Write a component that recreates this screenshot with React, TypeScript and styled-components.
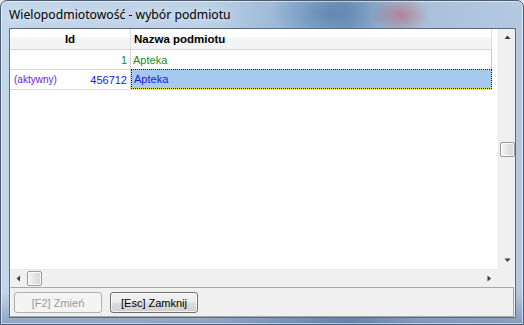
import React from "react";
import styled, { createGlobalStyle } from "styled-components";

type Row = {
  id: number;
  name: string;
  note?: string;
  active?: boolean;
};

const rows: Row[] = [
  { id: 1, name: "Apteka" },
  { id: 456712, name: "Apteka", note: "(aktywny)", active: true },
];

const GlobalStyle = createGlobalStyle`
  html, body {
    margin: 0;
    padding: 0;
    background: #dfe6ee;
  }
  * { box-sizing: border-box; }
`;

const Window = styled.div`
  position: relative;
  width: 524px;
  height: 325px;
  display: flex;
  flex-direction: column;
  padding: 0 7px 6px 8px;
  border-radius: 7px 7px 0 0;
  border: 1px solid #4a5d74;
  background:
    radial-gradient(ellipse 30px 18px at 400px 14px, rgba(190, 80, 90, 0.5), transparent),
    radial-gradient(ellipse 60px 30px at 330px 12px, rgba(60, 100, 150, 0.45), transparent),
    linear-gradient(180deg, transparent 0%, transparent 90%, rgba(40, 70, 120, 0.35) 100%),
    linear-gradient(
      90deg,
      #c4d6ea 0%,
      #bcd0e6 40%,
      #8fb0d2 58%,
      #7d9fc5 66%,
      #a9c0da 80%,
      #b4c9e0 100%
    );
  box-shadow: inset 0 0 0 1px rgba(255, 255, 255, 0.55);
  overflow: hidden;
`;

const TitleBar = styled.div`
  height: 27px;
  display: flex;
  align-items: center;
`;

const Title = styled.span`
  font-family: "Noto Sans", "Liberation Sans", sans-serif;
  font-size: 12.2px;
  color: #000;
  text-shadow: 0 0 8px rgba(255, 255, 255, 0.9);
`;

const Client = styled.div`
  flex: 1;
  display: flex;
  flex-direction: column;
  border: 1px solid #5a6b7e;
  background: #f0f0f0;
`;

const GridBox = styled.div`
  display: flex;
  flex-direction: column;
  height: 257px;
  background: #fff;
`;

const GridMain = styled.div`
  display: flex;
  height: 240px;
`;

const Viewport = styled.div`
  flex: 1;
  background: #fff;
`;

const Table = styled.div`
  width: 482px;
  font-family: "Liberation Sans", Arial, sans-serif;
  font-size: 11px;
`;

const HeaderRow = styled.div`
  display: grid;
  grid-template-columns: 121px 361px;
  height: 21px;
  border-bottom: 1px solid #d5d5d5;
  background: linear-gradient(#ffffff 0%, #ffffff 40%, #f3f4f6 45%, #f3f4f6 100%);
`;

const HeaderCell = styled.div<{ $align: "center" | "left" }>`
  display: flex;
  align-items: center;
  justify-content: ${(p) => (p.$align === "center" ? "center" : "flex-start")};
  padding-left: ${(p) => (p.$align === "center" ? "0" : "3px")};
  font-weight: bold;
  font-size: 11.5px;
  color: #000;
  border-right: 1px solid #dcdcdc;
`;

const DataRow = styled.div`
  display: grid;
  grid-template-columns: 121px 361px;
  height: 20px;
  border-bottom: 1px solid #d9d9d9;
`;

const IdCell = styled.div<{ $active?: boolean }>`
  display: flex;
  align-items: center;
  justify-content: space-between;
  padding: 0 3px 0 4px;
  border-right: 1px solid #d9d9d9;
  color: ${(p) => (p.$active ? "#1818e8" : "#1a8a1a")};
`;

const Note = styled.span`
  font-size: 10px;
  color: #6a20e0;
`;

const NameCell = styled.div<{ $selected?: boolean }>`
  display: flex;
  align-items: center;
  padding-left: 2px;
  border-right: 1px solid #c8c8c8;
  color: ${(p) => (p.$selected ? "#1818e8" : "#1a8a1a")};
  ${(p) =>
    p.$selected &&
    `
    margin-top: -1px;
    border: 1px dotted #111;
    background:
      linear-gradient(#a6c9ef, #a6c9ef) padding-box,
      linear-gradient(#e6e63a, #e6e63a) border-box;
  `}
`;

const VScroll = styled.div`
  width: 17px;
  display: flex;
  flex-direction: column;
  background: #f0f0f0;
  border-left: 1px solid #e8e8e8;
`;

const ArrowButton = styled.div`
  width: 17px;
  height: 17px;
  flex: none;
  display: flex;
  align-items: center;
  justify-content: center;
`;

const VTrack = styled.div`
  flex: 1;
  display: flex;
  flex-direction: column;
  align-items: center;
`;

const Thumb = styled.div`
  width: 15px;
  height: 15px;
  border: 1px solid #9a9a9a;
  border-radius: 2px;
  background: linear-gradient(90deg, #f6f6f6 0%, #e4e4e4 50%, #d6d6d6 100%);
  box-shadow: inset 0 0 0 1px rgba(255, 255, 255, 0.8);
`;

const HScrollRow = styled.div`
  display: flex;
  height: 17px;
`;

const HScroll = styled.div`
  flex: 1;
  display: flex;
  align-items: center;
  background: #f0f0f0;
  border-top: 1px solid #e8e8e8;
`;

const HTrack = styled.div`
  flex: 1;
  display: flex;
  align-items: center;
  height: 100%;
`;

const Corner = styled.div`
  width: 17px;
  background: #f0f0f0;
`;

const ButtonPanel = styled.div`
  flex: 1;
  display: flex;
  align-items: center;
  gap: 8px;
  margin: 1px 1px 0 0;
  padding: 1px 0 0 3px;
  border: 1px solid #a8a8a8;
  border-left-color: #f8f8f8;
  background: #f0f0f0;
`;

const Button = styled.button`
  width: 88px;
  height: 21px;
  padding: 0;
  border-radius: 3px;
  border: 1px solid #707070;
  background: linear-gradient(#f2f2f2 0%, #ebebeb 48%, #dddddd 52%, #cfcfcf 100%);
  box-shadow: inset 0 0 0 1px rgba(255, 255, 255, 0.7);
  font-family: "Liberation Sans", Arial, sans-serif;
  font-size: 11px;
  color: #000;

  &:disabled {
    border-color: #adb2b5;
    background: #f4f4f4;
    box-shadow: none;
    color: #9a9a9a;
  }
`;

const Arrow = ({ dir }: { dir: "up" | "down" | "left" | "right" }) => {
  const pts = {
    up: "0.5,4 3.5,0.5 6.5,4",
    down: "0.5,0.5 3.5,4 6.5,0.5",
    left: "4,0.5 0.5,3.5 4,6.5",
    right: "0.5,0.5 4,3.5 0.5,6.5",
  }[dir];
  const vertical = dir === "up" || dir === "down";
  return (
    <svg width={vertical ? 7 : 5} height={vertical ? 5 : 7}>
      <polygon points={pts} fill="#3c3c3c" />
    </svg>
  );
};

export default function App() {
  return (
    <>
      <GlobalStyle />
      <Window>
        <TitleBar>
          <Title>Wielopodmiotowość - wybór podmiotu</Title>
        </TitleBar>
        <Client>
          <GridBox>
            <GridMain>
              <Viewport>
                <Table>
                  <HeaderRow>
                    <HeaderCell $align="center">Id</HeaderCell>
                    <HeaderCell $align="left">Nazwa podmiotu</HeaderCell>
                  </HeaderRow>
                  {rows.map((r) => (
                    <DataRow key={r.id}>
                      <IdCell $active={r.active}>
                        <Note>{r.note}</Note>
                        <span>{r.id}</span>
                      </IdCell>
                      <NameCell $selected={r.active}>{r.name}</NameCell>
                    </DataRow>
                  ))}
                </Table>
              </Viewport>
              <VScroll>
                <ArrowButton>
                  <Arrow dir="up" />
                </ArrowButton>
                <VTrack>
                  <Thumb style={{ marginTop: 96 }} />
                </VTrack>
                <ArrowButton>
                  <Arrow dir="down" />
                </ArrowButton>
              </VScroll>
            </GridMain>
            <HScrollRow>
              <HScroll>
                <ArrowButton>
                  <Arrow dir="left" />
                </ArrowButton>
                <HTrack>
                  <Thumb />
                </HTrack>
                <ArrowButton>
                  <Arrow dir="right" />
                </ArrowButton>
              </HScroll>
              <Corner />
            </HScrollRow>
          </GridBox>
          <ButtonPanel>
            <Button disabled>[F2] Zmień</Button>
            <Button>[Esc] Zamknij</Button>
          </ButtonPanel>
        </Client>
      </Window>
    </>
  );
}
